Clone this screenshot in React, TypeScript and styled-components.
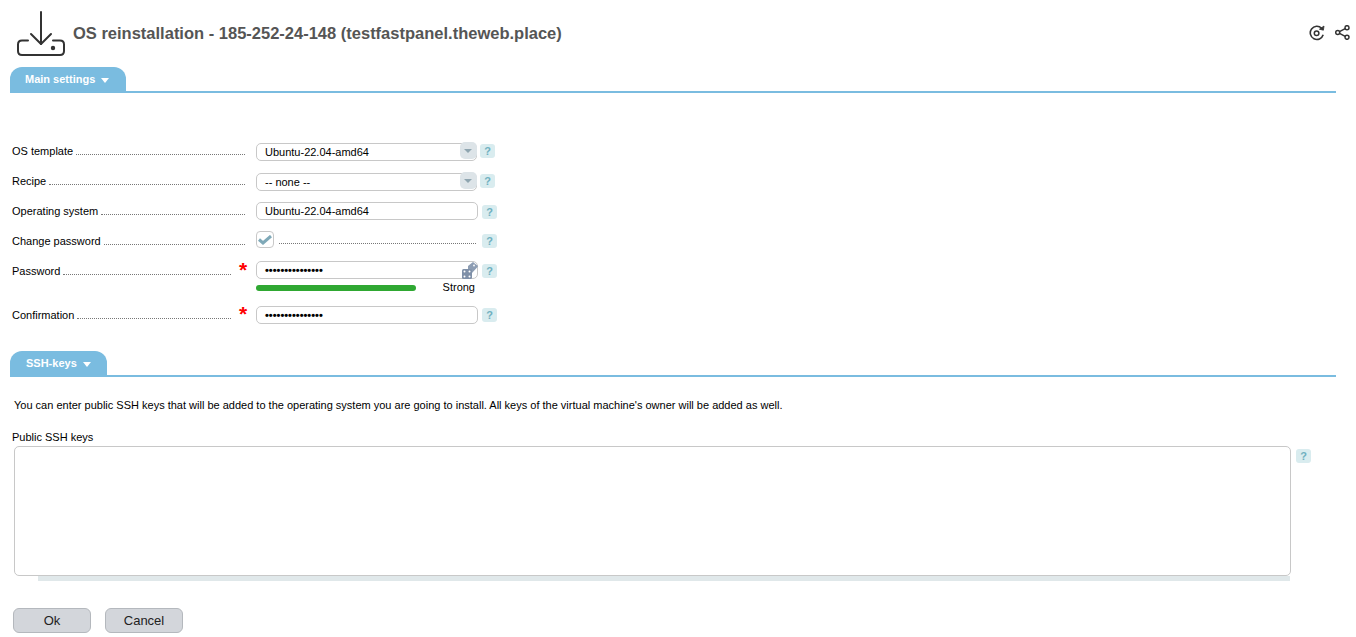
import React from 'react';
import styled, { createGlobalStyle } from 'styled-components';

const GlobalStyle = createGlobalStyle`
  html, body {
    margin: 0;
    padding: 0;
    background: #fff;
    font-family: "Liberation Sans", Arial, sans-serif;
    font-size: 11px;
    color: #000;
  }
`;

const Page = styled.div`
  width: 1356px;
  height: 637px;
  overflow: hidden;
  display: flex;
  flex-direction: column;
`;

const Header = styled.header`
  height: 67px;
  display: flex;
  align-items: center;
  padding-left: 16px;
  padding-right: 6px;
`;

const HeaderIcon = styled.svg`
  width: 50px;
  height: 46px;
  color: #333;
`;

const Title = styled.h1`
  margin: 0 0 0 7px;
  font-size: 16.5px;
  font-weight: bold;
  color: #555;
`;

const HeaderTools = styled.div`
  margin-left: auto;
  display: flex;
  gap: 10px;
  align-items: center;
  margin-top: -2px;
`;

const SectionHead = styled.div`
  margin: 0 20px 0 10px;
  height: 26px;
  border-bottom: 2px solid #7abce0;
  box-sizing: border-box;
  display: flex;
  align-items: flex-end;
`;

const Tab = styled.div<{ $width: number; $pad: number }>`
  width: ${(p) => p.$width}px;
  height: 24px;
  box-sizing: border-box;
  padding: 6px 0 0 ${(p) => p.$pad}px;
  background: #7abce0;
  border-radius: 12px 12px 0 0;
  color: #fff;
  font-weight: bold;
  font-size: 11px;
  display: flex;
  align-items: flex-start;
  gap: 6px;
`;

const Caret = styled.span`
  width: 0;
  height: 0;
  margin-top: 5px;
  border-left: 4.5px solid transparent;
  border-right: 4.5px solid transparent;
  border-top: 5px solid #fff;
`;

const Form = styled.div`
  padding: 49px 0 0 12px;
  height: 258px;
  box-sizing: border-box;
  display: flex;
  flex-direction: column;
`;

const Row = styled.div<{ $height?: number }>`
  display: flex;
  height: ${(p) => p.$height ?? 30}px;
  align-items: flex-start;
`;

const LabelCell = styled.div<{ $required?: boolean }>`
  width: ${(p) => (p.$required ? 219 : 233)}px;
  height: 19px;
  display: flex;
  align-items: flex-end;
  margin-right: ${(p) => (p.$required ? 25 : 11)}px;
  position: relative;
`;

const LabelText = styled.span`
  line-height: 13px;
  margin-bottom: 3px;
  white-space: nowrap;
`;

const Dots = styled.span`
  flex: 1;
  margin-left: 3px;
  margin-bottom: 6px;
  border-bottom: 1px dotted #777;
`;

const Asterisk = styled.span`
  position: absolute;
  left: 227px;
  top: -2px;
  color: #f00;
  font-size: 21px;
  font-weight: bold;
  line-height: 20px;
`;

const Field = styled.div<{ $top?: number }>`
  position: relative;
  width: 222px;
  height: 18px;
  margin-top: ${(p) => p.$top ?? 0}px;
  box-sizing: border-box;
  border: 1px solid #c8c8c8;
  border-radius: 5px;
  background: #fff;
  padding-left: 8px;
  line-height: 16px;
  white-space: nowrap;
`;

const SelectField = styled(Field)`
  width: 221px;
`;

const SelectArrow = styled.span`
  position: absolute;
  right: -1px;
  top: -2px;
  width: 17px;
  height: 17px;
  background: #dde4e8;
  border-radius: 5px;
  &::after {
    content: "";
    position: absolute;
    left: 4px;
    top: 7px;
    border-left: 4px solid transparent;
    border-right: 4px solid transparent;
    border-top: 4px solid #8fa5b0;
  }
`;

const Secret = styled.span`
  font-size: 11px;
  font-weight: bold;
`;

const Dice = styled.svg`
  position: absolute;
  right: -1px;
  top: 0;
  width: 16px;
  height: 17px;
`;

const Help = styled.span<{ $offset?: number; $top?: number }>`
  width: 15px;
  height: 14px;
  margin-left: ${(p) => p.$offset ?? 5}px;
  margin-top: ${(p) => p.$top ?? 2}px;
  background: #d9ecef;
  border-radius: 3px;
  color: #6fb0c0;
  font-size: 11px;
  font-weight: bold;
  line-height: 14px;
  text-align: center;
  flex: none;
`;

const CheckBox = styled.span`
  width: 18px;
  height: 17px;
  box-sizing: border-box;
  border: 1px solid #c8c8c8;
  border-radius: 4px;
  display: flex;
  align-items: center;
  justify-content: center;
  margin-top: -1px;
`;

const CheckLine = styled.span`
  width: 197px;
  height: 11px;
  margin-left: 5px;
  border-bottom: 1px dotted #777;
`;

const FieldStack = styled.div`
  display: flex;
  flex-direction: column;
  margin-top: -1px;
`;

const Strength = styled.div`
  width: 219px;
  display: flex;
  align-items: flex-start;
  justify-content: space-between;
  margin-top: 2px;
`;

const StrengthBar = styled.div`
  width: 160px;
  height: 6px;
  margin-top: 4px;
  border-radius: 3px;
  background: #2fa832;
`;

const StrengthLabel = styled.span`
  line-height: 13px;
`;

const Intro = styled.p`
  margin: 22px 0 0 14px;
  line-height: 13px;
`;

const KeysLabel = styled.div`
  margin: 19px 0 0 12px;
  line-height: 13px;
`;

const KeysRow = styled.div`
  display: flex;
  margin: 2px 0 0 14px;
  align-items: flex-start;
`;

const KeysBox = styled.div`
  width: 1277px;
  height: 130px;
  box-sizing: border-box;
  border: 1px solid #c8c8c8;
  border-radius: 5px;
  background: #fff;
`;

const ScrollTrack = styled.div`
  width: 1252px;
  height: 5px;
  margin-left: 38px;
  background: #e0e8ea;
`;

const Buttons = styled.div`
  display: flex;
  gap: 14px;
  margin: 27px 0 0 13px;
`;

const Button = styled.button`
  width: 78px;
  height: 25px;
  box-sizing: border-box;
  border: 1px solid #b4b8bd;
  border-radius: 6px;
  background: #d3d6db;
  color: #222;
  font-family: "Liberation Sans", Arial, sans-serif;
  font-size: 13px;
  padding: 0;
`;

const CheckIcon = () => (
  <svg width="14" height="10" viewBox="0 0 14 10">
    <path d="M1 4.5 L5 8 L13 1" fill="none" stroke="#7fa9b8" strokeWidth="3" />
  </svg>
);

export default function App() {
  return (
    <Page>
      <GlobalStyle />
      <Header>
        <HeaderIcon viewBox="0 0 50 46" fill="none" stroke="currentColor" strokeWidth="2" strokeLinecap="round" strokeLinejoin="round">
          <path d="M25 1 V33" />
          <path d="M15 23 L25 33 L35 23" />
          <path d="M12 29.5 H6 Q2 29.5 2 33.5 V40 Q2 44 6 44 H44 Q48 44 48 40 V33.5 Q48 29.5 44 29.5 H37" />
          <circle cx="37" cy="37" r="1.2" fill="currentColor" />
        </HeaderIcon>
        <Title>OS reinstallation - 185-252-24-148 (testfastpanel.theweb.place)</Title>
        <HeaderTools>
          <svg width="16" height="16" viewBox="0 0 16 16" fill="none" stroke="#333" strokeWidth="1.6">
            <path d="M12.6 3.2 A6.6 6.6 0 1 0 14.2 9.8" />
            <path d="M15 1 L14.4 5.2 L10.4 4.2 Z" fill="#333" strokeWidth="0.8" />
            <circle cx="7.6" cy="8.2" r="2.3" strokeWidth="1.5" />
          </svg>
          <svg width="15" height="15" viewBox="0 0 15 15" fill="none" stroke="#333" strokeWidth="1.5">
            <circle cx="12" cy="2.7" r="2" />
            <circle cx="2.7" cy="7.5" r="2" />
            <circle cx="12" cy="12.3" r="2" />
            <path d="M4.5 6.6 L10.2 3.6 M4.5 8.4 L10.2 11.4" />
          </svg>
        </HeaderTools>
      </Header>

      <SectionHead>
        <Tab $width={116} $pad={15}>Main settings <Caret /></Tab>
      </SectionHead>

      <Form>
        <Row>
          <LabelCell><LabelText>OS template</LabelText><Dots /></LabelCell>
          <SelectField $top={1}>Ubuntu-22.04-amd64<SelectArrow /></SelectField>
          <Help $offset={3}>?</Help>
        </Row>
        <Row>
          <LabelCell><LabelText>Recipe</LabelText><Dots /></LabelCell>
          <SelectField $top={1}>-- none --<SelectArrow /></SelectField>
          <Help $offset={3}>?</Help>
        </Row>
        <Row>
          <LabelCell><LabelText>Operating system</LabelText><Dots /></LabelCell>
          <Field>Ubuntu-22.04-amd64</Field>
          <Help $offset={4} $top={3}>?</Help>
        </Row>
        <Row>
          <LabelCell><LabelText>Change password</LabelText><Dots /></LabelCell>
          <CheckBox><CheckIcon /></CheckBox>
          <CheckLine />
          <Help $offset={6}>?</Help>
        </Row>
        <Row $height={44}>
          <LabelCell $required><LabelText>Password</LabelText><Dots /><Asterisk>*</Asterisk></LabelCell>
          <FieldStack>
            <Field>
              <Secret>•••••••••••••••</Secret>
              <Dice viewBox="0 0 16 17">
                <path d="M6 7 L6 4 L11 0 L16 4 L15.5 5 L10 11 L9 11 L9 7 Z" fill="#8d9db3" />
                <circle cx="12" cy="3.5" r="0.9" fill="#fff" />
                <rect x="0" y="7" width="10" height="10" rx="1.5" fill="#7f90a8" />
                <g fill="#fff">
                  <circle cx="2.5" cy="9.5" r="1" />
                  <circle cx="7.5" cy="9.5" r="1" />
                  <circle cx="2.5" cy="14.5" r="1" />
                  <circle cx="7.5" cy="14.5" r="1" />
                </g>
              </Dice>
            </Field>
            <Strength>
              <StrengthBar />
              <StrengthLabel>Strong</StrengthLabel>
            </Strength>
          </FieldStack>
          <Help $offset={4}>?</Help>
        </Row>
        <Row>
          <LabelCell $required><LabelText>Confirmation</LabelText><Dots /><Asterisk>*</Asterisk></LabelCell>
          <Field><Secret>•••••••••••••••</Secret></Field>
          <Help $offset={4}>?</Help>
        </Row>
      </Form>

      <SectionHead>
        <Tab $width={97} $pad={16}>SSH-keys <Caret /></Tab>
      </SectionHead>

      <Intro>You can enter public SSH keys that will be added to the operating system you are going to install. All keys of the virtual machine's owner will be added as well.</Intro>
      <KeysLabel>Public SSH keys</KeysLabel>
      <KeysRow>
        <KeysBox />
        <Help $top={3}>?</Help>
      </KeysRow>
      <ScrollTrack />

      <Buttons>
        <Button>Ok</Button>
        <Button>Cancel</Button>
      </Buttons>
    </Page>
  );
}
